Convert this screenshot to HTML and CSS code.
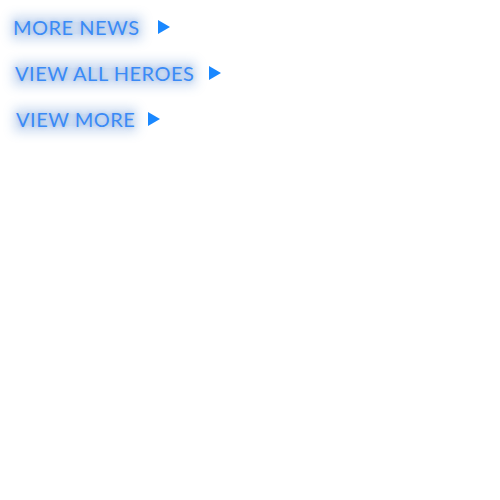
FILE: index.html
```html
<!DOCTYPE html>
<html>
<head>
<meta charset="utf-8">
<link rel="stylesheet" href="styles.css">
</head>
<body>
<nav class="links">
  <a class="more-link l1" href="#"><span class="label">MORE NEWS</span><span class="arrow"></span></a>
  <a class="more-link l2" href="#"><span class="label">VIEW ALL HEROES</span><span class="arrow"></span></a>
  <a class="more-link l3" href="#"><span class="label">VIEW MORE</span><span class="arrow"></span></a>
</nav>
</body>
</html>
```
FILE: styles.css
```css
html, body { margin: 0; padding: 0; background: #fff; }
body { min-height: 500px; }
.links {
  display: flex;
  flex-direction: column;
  align-items: flex-start;
  padding: 15px 0 0 13px;
  gap: 22px;
}
.more-link {
  display: flex;
  align-items: center;
  text-decoration: none;
  color: #3a8af6;
  font-family: "Lato", "DejaVu Sans", sans-serif;
  font-weight: 400;
  font-size: 20px;
  line-height: 24px;
  letter-spacing: 0.5px;
}
.label {
  position: relative;
  isolation: isolate;
  text-shadow: 0 0 4px rgba(30, 100, 200, 0.25);
}
.label::before {
  content: "";
  position: absolute;
  left: 4px; right: 4px; top: 7px; bottom: 5px;
  background: rgba(65, 122, 205, 0.26);
  box-shadow: 0 0 11px 6px rgba(65, 122, 205, 0.26);
  z-index: -1;
}
.arrow {
  flex: none;
  width: 0; height: 0;
  border-top: 7px solid transparent;
  border-bottom: 7px solid transparent;
  border-left: 12px solid #1a88ff;
}
.l1 .arrow { margin-left: 18px; }
.l2 { margin-left: 2px; }
.l2 .arrow { margin-left: 15px; }
.l3 { margin-left: 3px; }
.l3 .arrow { margin-left: 13px; }
```
